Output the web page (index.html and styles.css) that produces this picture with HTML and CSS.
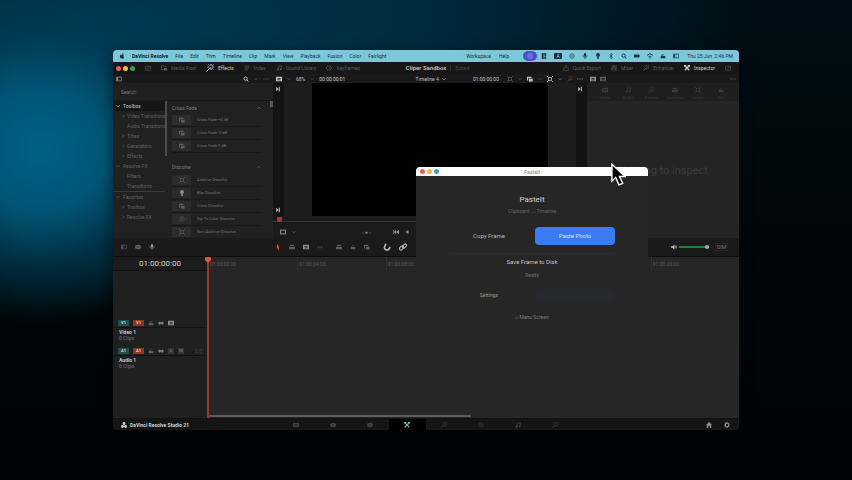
FILE: index.html
```html
<!DOCTYPE html>
<html lang="en">
<head>
<meta charset="utf-8">
<title>Cliper Sandbox</title>
<link rel="stylesheet" href="styles.css">
</head>
<body>
<svg class="defs" aria-hidden="true">
  <symbol id="chev" viewBox="0 0 8 8"><path d="M2 3l2 2 2-2" fill="none" stroke="currentColor"/></symbol>
  <symbol id="right" viewBox="0 0 8 8"><path d="M3 2l2 2-2 2" fill="none" stroke="currentColor"/></symbol>
  <symbol id="up" viewBox="0 0 8 8"><path d="M2 5l2-2 2 2" fill="none" stroke="currentColor"/></symbol>
  <symbol id="dots" viewBox="0 0 8 8"><path d="M0 4h2M3 4h2M6 4h2" stroke="currentColor"/></symbol>
  <symbol id="apple" viewBox="0 0 8 8"><path d="M4 2.500C5.500 1.500 6.500 2.500 6.500 3c-1 .8-.8 2 .2 2.500C6 7.500 5 8 4 7.300 2.500 8 1 6 1.200 4 1.500 2.200 3 2 4 2.500zM4 2C4 1 4.500.3 5.300 0 5.400 1 5 1.800 4 2z" fill="currentColor"/></symbol>
  <symbol id="search" viewBox="0 0 8 8"><circle cx="3.500" cy="3.500" r="2.200" fill="none" stroke="currentColor" stroke-width="1.200"/><path d="M5 5l2.200 2.200" stroke="currentColor" stroke-width="1.200"/></symbol>
  <symbol id="wand" viewBox="0 0 8 8"><path d="M.5 7.500L4.500 3.500M5 0v2M5 4v2M3 3H1.500M6 3h2M6.500 1.500l1-1M3.500 1.500l-1-1M6.500 4.500l1 1" stroke="currentColor" fill="none"/></symbol>
  <symbol id="list" viewBox="0 0 8 8"><path d="M1 1.500h6M1 4h6M1 6.500h4" stroke="currentColor"/></symbol>
  <symbol id="note" viewBox="0 0 8 8"><path d="M3 6V1.500L7 1v4.500" stroke="currentColor" fill="none"/><circle cx="2.200" cy="6.300" r="1.200" fill="currentColor"/><circle cx="6.200" cy="5.800" r="1.200" fill="currentColor"/></symbol>
  <symbol id="key" viewBox="0 0 8 8"><path d="M3 1l3 3-3 3-3-3zM5 1l3 3-3 3" stroke="currentColor" fill="none"/></symbol>
  <symbol id="pool" viewBox="0 0 8 8"><path d="M4 6H.5V1h3l1 1H7v1" stroke="currentColor" fill="none"/><path d="M4 4h4v3.500H4z" fill="currentColor"/></symbol>
  <symbol id="box" viewBox="0 0 8 8"><path d="M.5 1.500h7v5h-7z" stroke="currentColor" fill="none"/></symbol>
  <symbol id="check" viewBox="0 0 8 8"><path d="M.5 1.500h7v5.500h-7zM2 4l1.500 1.500L6.500 2" stroke="currentColor" fill="none" stroke-width=".8"/></symbol>
  <symbol id="panel" viewBox="0 0 8 8"><path d="M.5 1.500h7v5h-7z" stroke="currentColor" fill="none"/><path d="M1 2h2v4H1z" fill="currentColor"/></symbol>
  <symbol id="film" viewBox="0 0 8 8"><path d="M0 1h8v6H0zM2 2.500v1h4v-1zm0 2v1h4v-1z" fill="currentColor" fill-rule="evenodd"/></symbol>
  <symbol id="mixer" viewBox="0 0 8 8"><path d="M1.500 0v8M4 0v8M6.500 0v8M.5 5h2M3 2h2M5.500 5h2" stroke="currentColor" fill="none" stroke-width=".9"/></symbol>
  <symbol id="tools" viewBox="0 0 8 8"><path d="M1 1l6 6M7 1L1 7" stroke="currentColor" stroke-width="1.500"/><path d="M0 0h3v2H0zM5 0h3v2H5z" fill="currentColor"/></symbol>
  <symbol id="share" viewBox="0 0 8 8"><path d="M2 3H1v4.500h6V3H6M4 5V.5M2.500 2L4 .5 5.500 2" stroke="currentColor" fill="none" stroke-width=".8"/></symbol>
  <symbol id="frame" viewBox="0 0 8 8"><path d="M0 0l2 2M8 0L6 2M0 8l2-2M8 8L6 6M2 2h4v4H2z" stroke="currentColor" fill="none"/></symbol>
  <symbol id="layers" viewBox="0 0 8 8"><path d="M0 1h6v1.500H1.500V6H0z" fill="currentColor"/><path d="M2.500 3.500h5v4h-5z" fill="currentColor"/></symbol>
  <symbol id="next" viewBox="0 0 8 8"><path d="M1.500 1v6L5 4zM5 1h1.500v6H5z" fill="currentColor"/></symbol>
  <symbol id="prev" viewBox="0 0 8 8"><path d="M0 1h1v6H0zM4.500 1v6L1 4zM8 1v6L4.500 4z" fill="currentColor"/></symbol>
  <symbol id="play" viewBox="0 0 8 8"><path d="M6 1v6L2 4z" fill="currentColor"/></symbol>
  <symbol id="arrow" viewBox="0 0 8 8"><path d="M3 0l3 4.500H4.800L5.500 8H4L3.500 5.500 2 6z" fill="currentColor"/></symbol>
  <symbol id="clip" viewBox="0 0 8 8"><path d="M0 4h8v3H0zM1 1h6v2H1z" fill="currentColor"/></symbol>
  <symbol id="magnet" viewBox="0 0 8 8"><path d="M3 .8L1.500 4C.8 6.500 4.500 8.200 6 5.800L7.200 4" stroke="currentColor" fill="none" stroke-width="1.500"/></symbol>
  <symbol id="link" viewBox="0 0 8 8"><rect x=".2" y="3.600" width="4.600" height="2.800" rx="1.400" transform="rotate(-45 2.500 5)" fill="none" stroke="currentColor"/><rect x="3.200" y="1.600" width="4.600" height="2.800" rx="1.400" transform="rotate(-45 5.500 3)" fill="none" stroke="currentColor"/></symbol>
  <symbol id="speaker" viewBox="0 0 8 8"><path d="M0 3h2l2.500-2.500v7L2 5H0z" fill="currentColor"/><path d="M5.500 2.500q1.200 1.500 0 3M6.500 1.500q2 2.500 0 5" stroke="currentColor" fill="none" stroke-width=".8"/></symbol>
  <symbol id="lock" viewBox="0 0 8 8"><path d="M1 4h6v3H1z" fill="currentColor"/><path d="M2.500 4V2.500h3" stroke="currentColor" fill="none"/></symbol>
  <symbol id="eye" viewBox="0 0 8 8"><path d="M0 4l2.500-2.500v5zM8 4L5.500 1.500v5zM3 2.500h2v3H3z" fill="currentColor"/></symbol>
  <symbol id="mic" viewBox="0 0 8 8"><rect x="2.500" y="0" width="3" height="5" rx="1.500" fill="currentColor"/><path d="M1 3q0 3 3 3t3-3M4 6v2" stroke="currentColor" fill="none" stroke-width=".8"/></symbol>
  <symbol id="oval" viewBox="0 0 8 8"><ellipse cx="4" cy="4" rx="4" ry="3" fill="currentColor"/><circle cx="4" cy="4" r="1" fill="#1b1b1b"/></symbol>
  <symbol id="tiles" viewBox="0 0 8 8"><path d="M1 0h2.500v8H1zM4.500 0H7v3.500H4.500zM4.500 4.500H7V8H4.500z" fill="currentColor"/></symbol>
  <symbol id="pin" viewBox="0 0 8 8"><circle cx="4" cy="2.500" r="2.500" fill="currentColor"/><path d="M3 4h2v4H3z" fill="currentColor"/></symbol>
  <symbol id="ring" viewBox="0 0 8 8"><circle cx="4" cy="4" r="3" stroke="currentColor" fill="none" stroke-width=".8"/><circle cx="4" cy="4" r="1" fill="currentColor"/></symbol>
  <symbol id="bt" viewBox="0 0 8 8"><path d="M2 2l4 4-2 1.500v-7L6 2 2 6" stroke="currentColor" fill="none" stroke-width=".8"/></symbol>
  <symbol id="batt" viewBox="0 0 8 8"><rect x="0" y="2" width="7" height="4" rx="1" fill="currentColor"/><path d="M7.500 3v2" stroke="currentColor"/></symbol>
  <symbol id="wifi" viewBox="0 0 8 8"><path d="M0 3q4-4 8 0M2 5q2-2 4 0" stroke="currentColor" fill="none" stroke-width="1.200"/><circle cx="4" cy="6.500" r=".9" fill="currentColor"/></symbol>
  <symbol id="home" viewBox="0 0 8 8"><path d="M4 0l4 4H7v4H5V5H3v3H1V4H0z" fill="currentColor"/></symbol>
  <symbol id="gear" viewBox="0 0 8 8"><circle cx="4" cy="4" r="2.400" stroke="currentColor" fill="none" stroke-width="1.600"/><path d="M4 0v1M4 7v1M0 4h1M7 4h1M1 1l1 1M6 6l1 1M7 1L6 2M2 6L1 7" stroke="currentColor"/></symbol>
  <symbol id="logo" viewBox="0 0 8 8"><circle cx="4" cy="2" r="1.900" fill="currentColor"/><circle cx="1.900" cy="6" r="1.900" fill="currentColor"/><circle cx="6.100" cy="6" r="1.900" fill="currentColor"/><path d="M4 2v3" stroke="currentColor"/></symbol>
</svg>

<main class="desktop">
  <div class="screen">
    <nav class="menubar" aria-label="Menu bar">
      <svg class="ic"><use href="#apple"/></svg>
      <b>DaVinci Resolve</b><span>File</span><span>Edit</span><span>Trim</span><span>Timeline</span><span>Clip</span><span>Mark</span><span>View</span><span>Playback</span><span>Fusion</span><span>Color</span><span>Fairlight</span>
      <div class="status">
        <span>Workspace</span><span>Help</span>
        <i class="share-dot"><svg class="ic"><use href="#ring"/></svg></i>
        <div class="status-icons">
          <svg class="ic"><use href="#tiles"/></svg>
          <i class="badge">A</i>
          <svg class="ic"><use href="#ring"/></svg>
          <svg class="ic"><use href="#mic"/></svg>
          <svg class="ic"><use href="#pin"/></svg>
          <svg class="ic"><use href="#bt"/></svg>
          <svg class="ic"><use href="#search"/></svg>
          <svg class="ic"><use href="#batt"/></svg>
          <svg class="ic"><use href="#wifi"/></svg>
          <svg class="ic"><use href="#lock"/></svg>
          <svg class="ic"><use href="#panel"/></svg>
        </div>
        <time>Thu 25 Jun&nbsp; 2:46 PM</time>
      </div>
    </nav>

    <header class="toolbar">
      <div class="tools">
        <div class="lights"><i></i><i></i><i></i></div>
        <svg class="ic"><use href="#check"/></svg>
        <button class="tool"><svg class="ic"><use href="#pool"/></svg>Media Pool</button>
        <button class="tool on"><svg class="ic big"><use href="#wand"/></svg>Effects</button>
        <button class="tool"><svg class="ic"><use href="#list"/></svg>Index</button>
        <button class="tool"><svg class="ic"><use href="#note"/></svg>Sound Library</button>
        <button class="tool"><svg class="ic"><use href="#key"/></svg>Keyframes</button>
      </div>
      <div class="project"><h1>Cliper Sandbox</h1><span>Edited</span></div>
      <div class="tools right">
        <button class="tool"><svg class="ic"><use href="#share"/></svg>Quick Export</button>
        <button class="tool"><svg class="ic"><use href="#mixer"/></svg>Mixer</button>
        <button class="tool"><svg class="ic"><use href="#wand"/></svg>Enhancer</button>
        <button class="tool on"><svg class="ic"><use href="#tools"/></svg>Inspector</button>
        <svg class="ic"><use href="#check"/></svg>
      </div>
    </header>

    <div class="subbar">
      <div class="sub-left">
        <svg class="ic mid"><use href="#panel"/></svg>
        <svg class="ic lit push"><use href="#search"/></svg>
        <svg class="ic"><use href="#chev"/></svg>
        <svg class="ic"><use href="#dots"/></svg>
      </div>
      <div class="sub-view">
        <svg class="ic lit"><use href="#film"/></svg>
        <svg class="ic"><use href="#chev"/></svg>
        <span class="lit">68%</span>
        <svg class="ic"><use href="#chev"/></svg>
        <span class="lit">00:00:00:01</span>
        <span class="name">Timeline 4 <svg class="ic"><use href="#chev"/></svg></span>
        <span class="lit">01:00:00:00</span>
        <svg class="ic gap"><use href="#frame"/></svg>
        <svg class="ic"><use href="#chev"/></svg>
        <svg class="ic lit"><use href="#layers"/></svg>
        <svg class="ic"><use href="#chev"/></svg>
        <svg class="ic lit"><use href="#frame"/></svg>
        <svg class="ic mid"><use href="#chev"/></svg>
        <svg class="ic red"><use href="#wand"/></svg>
        <svg class="ic mid"><use href="#dots"/></svg>
      </div>
      <div class="sub-inspect">
        <svg class="ic mid"><use href="#film"/></svg>
        <svg class="ic"><use href="#film"/></svg>
        <svg class="ic push"><use href="#dots"/></svg>
      </div>
    </div>

    <div class="workspace">
      <section class="effects" aria-label="Effects">
        <input class="search" type="text" placeholder="Search" aria-label="Search effects">
        <div class="browser">
          <ul class="tree">
            <li class="root sel"><svg class="ic"><use href="#chev"/></svg>Toolbox</li>
            <li><svg class="ic"><use href="#right"/></svg>Video Transitions</li>
            <li><svg class="ic"></svg>Audio Transitions</li>
            <li><svg class="ic"><use href="#right"/></svg>Titles</li>
            <li><svg class="ic"><use href="#right"/></svg>Generators</li>
            <li><svg class="ic"><use href="#right"/></svg>Effects</li>
            <li class="root"><svg class="ic"><use href="#chev"/></svg>Resolve FX</li>
            <li><svg class="ic"></svg>Filters</li>
            <li><svg class="ic"></svg>Transitions</li>
            <li class="root fav"><svg class="ic"><use href="#chev"/></svg>Favorites</li>
            <li><svg class="ic"><use href="#right"/></svg>Toolbox</li>
            <li><svg class="ic"><use href="#right"/></svg>Resolve FX</li>
          </ul>
          <div class="items">
            <h2>Cross Fade<svg class="ic"><use href="#up"/></svg></h2>
            <ul>
              <li><i class="thumb"><svg class="ic"><use href="#layers"/></svg></i>Cross Fade +3 dB</li>
              <li><i class="thumb"><svg class="ic"><use href="#layers"/></svg></i>Cross Fade -3 dB</li>
              <li><i class="thumb"><svg class="ic"><use href="#layers"/></svg></i>Cross Fade 0 dB</li>
            </ul>
            <h2 class="second">Dissolve<svg class="ic"><use href="#up"/></svg></h2>
            <ul>
              <li><i class="thumb"><svg class="ic"><use href="#frame"/></svg></i>Additive Dissolve</li>
              <li><i class="thumb mid"><svg class="ic"><use href="#pin"/></svg></i>Blur Dissolve</li>
              <li><i class="thumb"><svg class="ic"><use href="#layers"/></svg></i>Cross Dissolve</li>
              <li><i class="thumb"><svg class="ic"><use href="#ring"/></svg></i>Dip To Color Dissolve</li>
              <li><i class="thumb"><svg class="ic"><use href="#frame"/></svg></i>Non-Additive Dissolve</li>
            </ul>
          </div>
        </div>
      </section>

      <section class="viewer" aria-label="Viewer">
        <div class="stage">
          <div class="edge"><svg class="ic"><use href="#next"/></svg><svg class="ic"><use href="#next"/></svg></div>
          <div class="video"></div>
          <div class="edge"><svg class="ic"><use href="#next"/></svg></div>
        </div>
        <div class="scrub"><i></i></div>
        <div class="transport">
          <svg class="ic lit"><use href="#box"/></svg>
          <svg class="ic"><use href="#chev"/></svg>
          <span class="jog">‹ ● ›</span>
          <svg class="ic mid"><use href="#prev"/></svg>
          <svg class="ic mid"><use href="#play"/></svg>
        </div>
      </section>

      <aside class="inspector" aria-label="Inspector">
        <div class="tabs">
          <span><svg class="ic"><use href="#film"/></svg>Video</span>
          <span><svg class="ic"><use href="#note"/></svg>Audio</span>
          <span><svg class="ic"><use href="#wand"/></svg>Effects</span>
          <span><svg class="ic"><use href="#clip"/></svg>Transition</span>
          <span><svg class="ic"><use href="#frame"/></svg>Image</span>
          <span><svg class="ic"><use href="#lock"/></svg>File</span>
        </div>
        <p>Nothing to inspect</p>
      </aside>
    </div>

    <div class="editbar">
      <div class="edit-left">
        <svg class="ic"><use href="#panel"/></svg>
        <svg class="ic"><use href="#oval"/></svg>
        <svg class="ic mid"><use href="#mic"/></svg>
      </div>
      <div class="edit-tools">
        <svg class="ic orange"><use href="#arrow"/></svg>
        <svg class="ic"><use href="#clip"/></svg>
        <svg class="ic mid"><use href="#film"/></svg>
        <svg class="ic faint"><use href="#eye"/></svg>
        <svg class="ic wide"><use href="#clip"/></svg>
        <svg class="ic"><use href="#lock"/></svg>
        <svg class="ic"><use href="#layers"/></svg>
        <svg class="ic lit big wide"><use href="#magnet"/></svg>
        <svg class="ic lit big"><use href="#link"/></svg>
      </div>
      <div class="volume">
        <svg class="ic lit"><use href="#speaker"/></svg>
        <input type="range" min="0" max="100" value="100" aria-label="Volume">
        <span>DIM</span>
      </div>
    </div>

    <section class="timeline" aria-label="Timeline">
      <div class="heads">
        <div class="timecode">01:00:00:00</div>
        <div class="track video-track">
          <div class="track-row"><b class="tag teal">V1</b><b class="tag rust">V1</b><svg class="ic"><use href="#lock"/></svg><svg class="ic mid"><use href="#eye"/></svg><svg class="ic mid"><use href="#film"/></svg></div>
          <div class="track-name"><b>Video 1</b><span>0 Clips</span></div>
        </div>
        <div class="track">
          <div class="track-row"><b class="tag teal">A1</b><b class="tag rust">A1</b><svg class="ic"><use href="#lock"/></svg><svg class="ic mid"><use href="#eye"/></svg><i class="sm">S</i><i class="sm">M</i><em>2.0</em></div>
          <div class="track-name"><b>Audio 1</b><span>0 Clips</span></div>
        </div>
      </div>
      <div class="lanes">
        <div class="ruler"><span>01:00:00:00</span><span>01:00:04:00</span><span>01:00:08:00</span><span>01:00:12:00</span><span>01:00:16:00</span><span>01:00:20:00</span></div>
        <div class="scroll"><i></i></div>
      </div>
    </section>

    <footer class="pages">
      <div class="brand"><svg class="ic"><use href="#logo"/></svg><b>DaVinci Resolve Studio 21</b></div>
      <div class="page-tabs">
        <button aria-label="Media"><svg class="ic"><use href="#film"/></svg></button>
        <button aria-label="Cut"><svg class="ic"><use href="#oval"/></svg></button>
        <button aria-label="Photo"><svg class="ic"><use href="#oval"/></svg></button>
        <button class="active" aria-label="Edit"><svg class="ic"><use href="#tools"/></svg></button>
        <button aria-label="Fusion"><svg class="ic"><use href="#wand"/></svg></button>
        <button aria-label="Color"><svg class="ic"><use href="#ring"/></svg></button>
        <button aria-label="Fairlight"><svg class="ic"><use href="#note"/></svg></button>
        <button aria-label="Deliver"><svg class="ic"><use href="#wand"/></svg></button>
      </div>
      <div class="page-end"><svg class="ic mid"><use href="#home"/></svg><svg class="ic mid"><use href="#gear"/></svg></div>
    </footer>

    <div class="dialog" role="dialog" aria-label="PasteIt">
      <div class="titlebar"><div class="lights"><i></i><i></i><i></i></div><span>PasteIt</span></div>
      <div class="dialog-body">
        <h2>PasteIt</h2>
        <p class="hint">Clipboard → Timeline</p>
        <div class="actions"><button>Copy Frame</button><button class="primary">Paste Photo</button></div>
        <button class="save">Save Frame to Disk</button>
        <p class="ready">Ready</p>
        <div class="actions settings"><button>Settings</button><i></i></div>
        <p class="foot">⌂ Menu Screen</p>
      </div>
    </div>

    <svg class="cursor" viewBox="0 0 16 26"><path d="M1 1v18l4-4 3.500 8 4-1.700L9 14h6z" fill="#000" stroke="#fff" stroke-width="1.500"/></svg>
  </div>
</main>
</body>
</html>
```

FILE: styles.css
```css
* { box-sizing: border-box; }

body {
  margin: 0;
  background: #000;
  color: #5c5c5c;
  font: 5px/6px Roboto, "Noto Sans", sans-serif;
}

h1, h2, p, ul { margin: 0; padding: 0; font-weight: 400; }
ul { list-style: none; }
i, em { font-style: normal; }
button { border: 0; padding: 0; background: none; color: inherit; font: inherit; }

.defs { position: absolute; width: 0; height: 0; }
.ic { width: 6px; height: 6px; flex: none; display: block; }
.ic.big { width: 8px; height: 8px; }
.lit { color: #c4c4c4; }
.mid { color: #909090; }
.faint { color: #3a3a3a; }
.red { color: #7c3a34; }
.orange { color: #d8512f; }
.push { margin-left: auto; }

.desktop {
  display: flex;
  min-height: 100vh;
  padding: 50px 113px;
  background:
    radial-gradient(ellipse 190px 175px at 40px 150px, #006185 0%, #005879ee 35%, #00415b99 65%, transparent 100%),
    radial-gradient(ellipse 600px 290px at 160px 20px, #003850 0%, #002e43dd 45%, transparent 100%),
    linear-gradient(#000d14, #000608 60%, #000203);
}

.screen {
  position: relative;
  flex: 1;
  display: flex;
  flex-direction: column;
  min-width: 0;
  border-radius: 4px;
  background: #1c1c1c;
  box-shadow: 0 4px 14px #0008;
}

/* macOS menu bar */
.menubar {
  display: flex;
  align-items: center;
  gap: 7px;
  height: 12px;
  padding: 0 6px;
  border-radius: 4px 4px 0 0;
  background: #7fc6d8;
  color: #12343e;
  white-space: nowrap;
}
.menubar b { color: #06212a; }
.status { display: flex; align-items: center; gap: 8px; margin-left: auto; }
.status-icons { display: flex; gap: 7px; }
.share-dot { display: grid; place-items: center; width: 14px; height: 10px; margin: 0 -4px 0 6px; border-radius: 5px; background: #4a51c9; color: #a9b4ff; }
.badge { width: 8px; height: 6px; border-radius: 1px; background: #12343e; color: #9fdcea; text-align: center; }

/* application toolbar */
.toolbar { display: grid; grid-template-columns: 1fr auto 1fr; align-items: center; height: 12px; padding: 0 8px 0 3px; background: #171717; white-space: nowrap; }
.tools { display: flex; align-items: center; gap: 10px; }
.tools.right { justify-content: flex-end; }
.tool { display: flex; align-items: center; gap: 4px; }
.tool.on { color: #d2d2d2; }
.lights { display: flex; gap: 2px; }
.lights i { width: 5px; height: 5px; border-radius: 50%; background: #e8604f; }
.lights i:nth-child(2) { background: #f2bd3c; }
.lights i:nth-child(3) { background: #3f9c52; }
.project { display: flex; align-items: center; gap: 4px; padding-left: 28px; }
.project h1 { font-size: 6px; font-weight: 500; color: #cfcfcf; }
.project span { padding-left: 4px; border-left: 1px solid #333; color: #484848; }

.subbar { display: flex; height: 9px; background: #191919; }
.subbar > div { display: flex; align-items: center; gap: 4px; }
.sub-left { width: 160px; padding: 0 4px 0 3px; }
.sub-view { flex: 1; padding: 0 4px 0 3px; }
.sub-view .name { display: flex; flex: 1; justify-content: center; gap: 2px; padding-left: 44px; color: #bbb; }
.sub-view .gap { margin-left: 4px; }
.sub-inspect { width: 152px; padding: 0 3px; }

/* upper workspace */
.workspace { display: flex; height: 155px; }
.effects { display: flex; flex-direction: column; width: 160px; background: #212121; }
.search { height: 18px; padding: 0 8px; border: 0; border-bottom: 1px solid #191919; background: #202020; color: #888; font: inherit; }
.search::placeholder { color: #777; opacity: 1; }
.browser { display: flex; flex: 1; min-height: 0; }
.tree { width: 54px; border-right: 2px solid #222; border-image: linear-gradient(#4c4c4c 40%, #222 40%) 1; white-space: nowrap; }
.tree li { display: flex; align-items: center; gap: 1px; height: 10px; padding-left: 7px; color: #626262; }
.tree .root { gap: 2px; padding-left: 2px; }
.tree .sel { background: #161616; color: #c8c8c8; }
.tree .fav { height: 11px; border-top: 1px solid #3c3c3c; }
.items { flex: 1; padding: 0 8px 0 5px; overflow: hidden; border-right: 3px solid; border-image: linear-gradient(#5a5a5a 5%, #212121 5%) 1; }
.items h2 { display: flex; justify-content: space-between; align-items: center; height: 13px; font-size: 5px; color: #7c7c7c; }
.items .second { margin-top: 7px; height: 14px; }
.items li { display: flex; align-items: center; gap: 6px; height: 13px; border-bottom: 1px solid #191919; color: #747474; font-size: 4px; white-space: nowrap; }
.thumb { display: grid; place-items: center; width: 19px; height: 10px; background: #2c2c2c; color: #5c5c5c; }
.thumb.mid { color: #909090; }

.viewer { display: flex; flex: 1; flex-direction: column; min-width: 0; background: #1b1b1b; }
.stage { display: flex; height: 133px; }
.edge { display: flex; flex-direction: column; justify-content: space-between; width: 39px; padding: 3px 2px; color: #b0b0b0; background: linear-gradient(90deg, #131313 11px, #1d1d1d 11px); }
.edge:last-child { align-items: flex-end; padding-right: 4px; background: linear-gradient(270deg, #131313 11px, #1d1d1d 11px); }
.video { flex: 1; background: #000; }
.scrub { height: 9px; padding: 1px 4px; background: linear-gradient(#1b1b1b 5px, #353535 5px, #353535 6px, #1b1b1b 6px); }
.scrub i { display: block; width: 5px; height: 5px; border-radius: 1px 1px 3px 3px; background: #a83c26; }
.transport { display: flex; align-items: center; gap: 5px; height: 13px; padding: 0 7px; }
.transport .jog { margin: 0 17px 0 60px; color: #888; }

.inspector { width: 152px; background: #252525; text-align: center; }
.tabs { display: flex; justify-content: space-around; height: 18px; padding: 4px 6px 0; background: #1f1f1f; color: #3c3c3c; font-size: 4px; line-height: 4px; }
.tabs span { display: flex; flex-direction: column; align-items: center; gap: 3px; width: 22px; }
.inspector p { margin-top: 64px; color: #3b3b3b; font-size: 11px; line-height: 12px; }

/* edit tools */
.editbar { display: flex; align-items: center; height: 19px; background: #1a1a1a; border-bottom: 1px solid #0c0c0c; }
.edit-left { display: flex; gap: 8px; width: 160px; padding-left: 8px; }
.edit-tools { display: flex; flex: 1; align-items: center; gap: 8px; padding-left: 2px; }
.edit-tools .wide { margin-left: 5px; }
.volume { display: flex; align-items: center; gap: 2px; width: 91px; padding-left: 23px; }
.volume span { margin-left: 4px; padding: 0 1px; border: 1px solid #262626; color: #777; }
.volume input { width: 30px; height: 6px; margin: 0; appearance: none; background: linear-gradient(#1a1a1a 2px, #23833e 2px, #23833e 4px, #1a1a1a 4px); }
.volume input::-webkit-slider-thumb { appearance: none; width: 4px; height: 4px; border-radius: 50%; background: #aaa; }

/* timeline */
.timeline { display: flex; flex: 1; min-height: 0; }
.heads { width: 94px; background: #202020; }
.timecode { height: 14px; border-bottom: 1px solid #111; background: #1c1c1c; color: #d4d4d4; font-size: 8px; line-height: 14px; text-align: center; }
.video-track { margin-top: 47px; }
.track-row { display: flex; align-items: center; gap: 4px; height: 10px; padding: 0 5px; border-bottom: 1px solid #131313; }
.tag { width: 11px; height: 6px; font-size: 4px; text-align: center; color: #d8d8d8; }
.tag.teal { background: #24504c; }
.tag.rust { background: #8a3823; }
.sm { width: 6px; height: 6px; background: #363636; color: #888; font-size: 4px; text-align: center; }
.track-row em { margin-left: auto; color: #484848; }
.track-name { display: flex; flex-direction: column; height: 18px; padding: 1px 6px; color: #787878; }
.track-name b { color: #c4c4c4; }
.lanes { display: flex; flex: 1; flex-direction: column; min-width: 0; border-left: 2px solid #943a28; background: #262626; }
.lanes::before { content: ""; width: 6px; height: 5px; margin: 0 0 -5px -4px; border-radius: 1px 1px 3px 3px; background: #dd5738; }
.ruler { display: grid; grid-template-columns: repeat(6, 1fr); height: 14px; }
.ruler span { padding: 4px 1px 0; color: #5a5a5a; border-left: 1px solid #303030; }
.ruler span:first-child { border: 0; }
.scroll { margin-top: auto; padding-bottom: 1px; }
.scroll i { display: block; width: 49.5%; height: 2px; background: #5e5e5e; }

/* page switcher */
.pages { display: flex; align-items: center; height: 12px; border-top: 1px solid #111; border-radius: 0 0 4px 4px; background: #151515; white-space: nowrap; }
.brand { display: flex; align-items: center; gap: 3px; flex: 1; padding-left: 8px; color: #d0d0d0; }
.page-tabs { display: flex; height: 11px; }
.page-tabs button { display: grid; place-items: center; width: 37px; color: #444; }
.page-tabs .active { background: #000; color: #7ba7a6; }
.page-end { display: flex; flex: 1; justify-content: flex-end; gap: 12px; padding-right: 9px; }

/* floating window */
.dialog { position: absolute; left: 303px; top: 117px; width: 232px; height: 182px; border-radius: 4px 4px 0 0; background: #262626; color: #a8a8a8; text-align: center; }
.titlebar { display: flex; align-items: center; height: 9px; padding: 0 4px; border-radius: 4px 4px 0 0; background: #fdfdfd; }
.titlebar .lights i:nth-child(3) { background: #3f9fb4; }
.titlebar span { flex: 1; padding-right: 19px; color: #888; }
.dialog-body { display: flex; flex-direction: column; padding: 18px 33px 0; }
.dialog h2 { color: #d6d6d6; font-size: 8px; line-height: 12px; }
.hint { margin-top: 2px; color: #666; }
.actions { display: grid; grid-template-columns: 1fr 1fr; gap: 6px; height: 18px; margin-top: 13px; font-size: 6px; color: #b8b8b8; }
.primary { border-radius: 4px; background: #3b7bf2; color: #d4e3ff; }
.save { margin-top: 8px; padding-top: 5px; border-top: 1px solid #2b2b2b; color: #c4c4c4; font-size: 6px; line-height: 6px; }
.ready { margin-top: 7px; color: #737373; }
.settings { margin-top: 8px; color: #999; font-size: 5px; }
.settings i { height: 12px; align-self: center; border-radius: 4px; background: #26282c; }
.foot { margin-top: 10px; color: #7a7a7a; }

.cursor { position: absolute; left: 498px; top: 113px; width: 15px; height: 25px; }
```
